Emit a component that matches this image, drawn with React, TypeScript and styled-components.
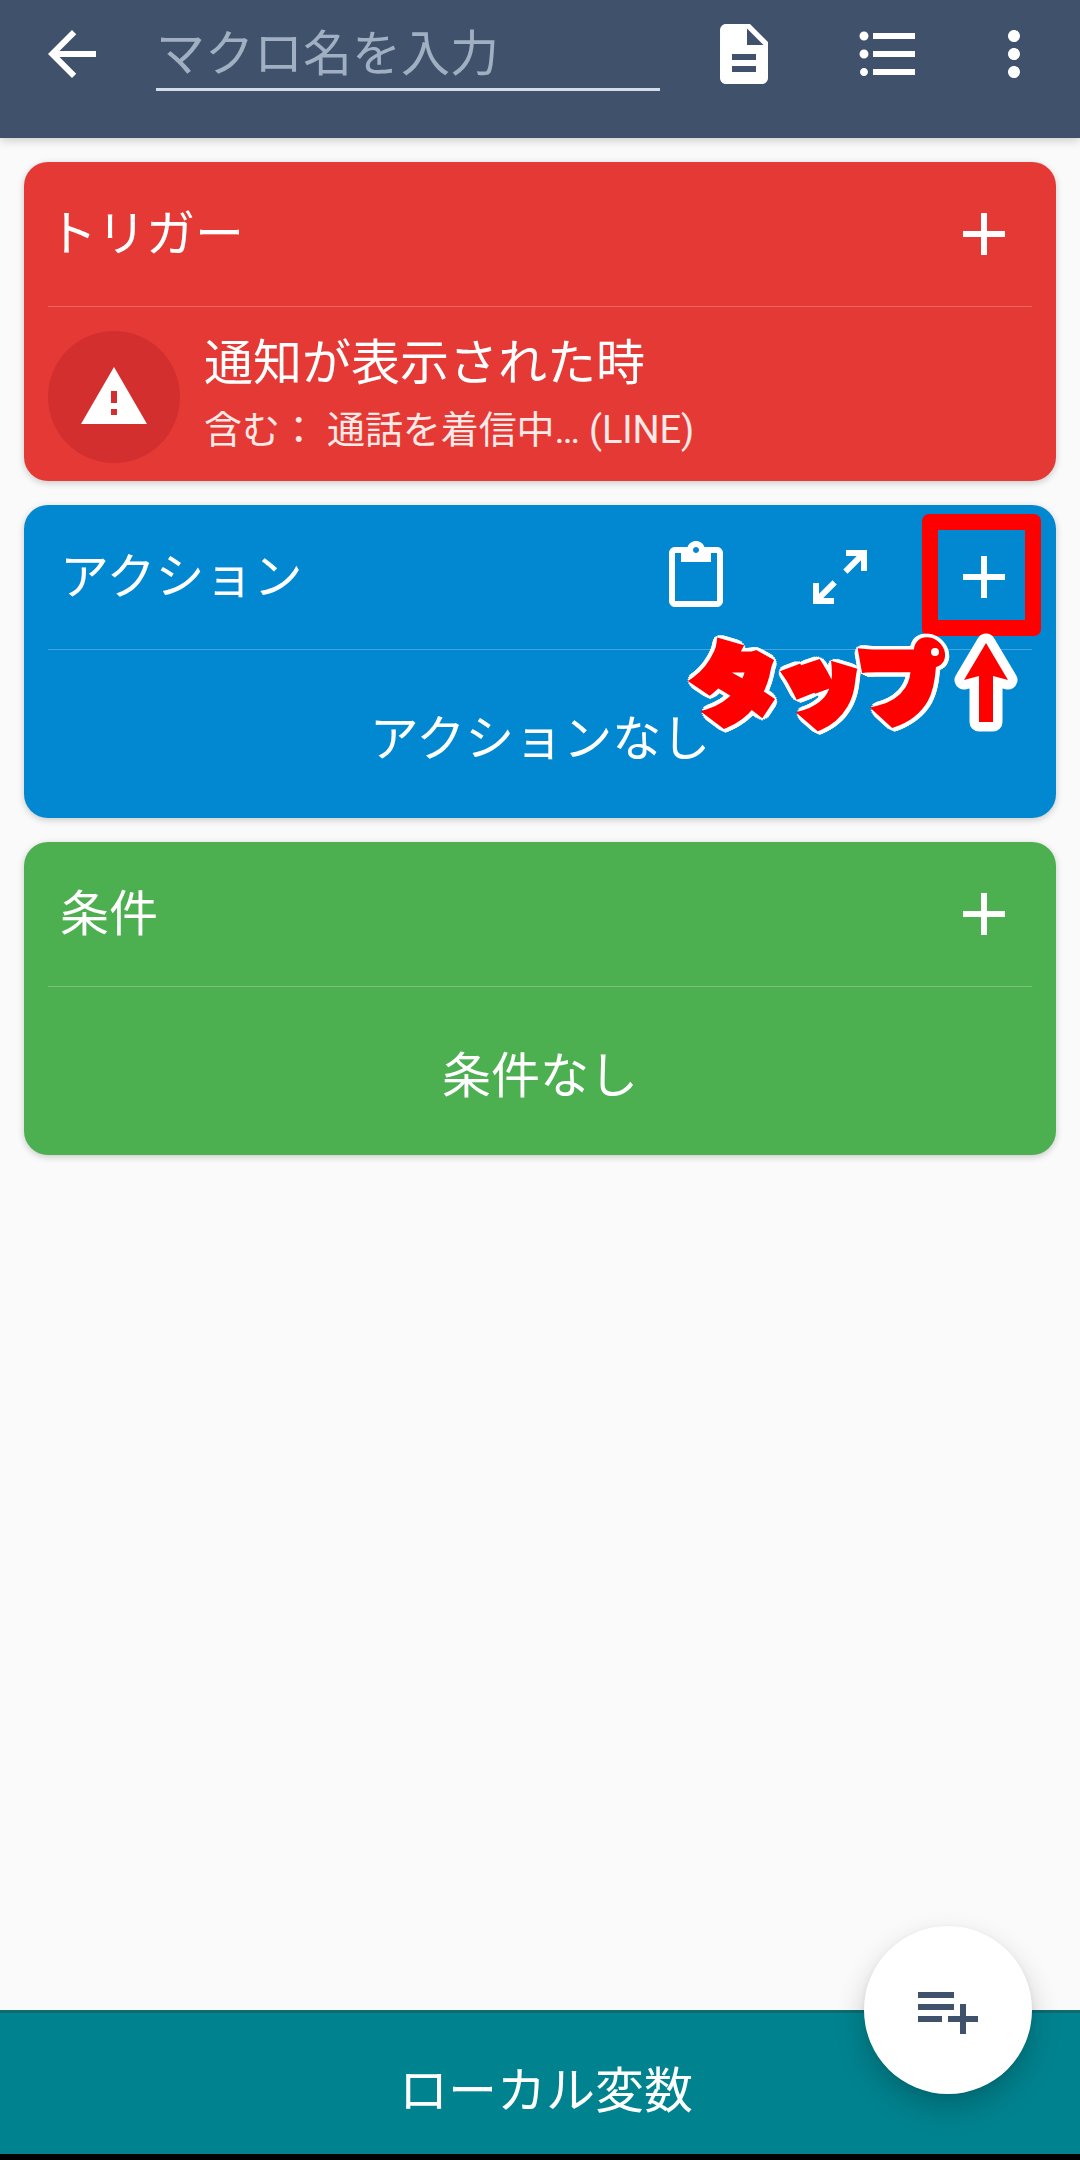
import React from 'react';
import styled, { createGlobalStyle } from 'styled-components';

const GlobalStyle = createGlobalStyle`
  * { box-sizing: border-box; }
  body {
    margin: 0;
    background: #fafafa;
    font-family: Roboto, "Noto Sans CJK JP", sans-serif;
  }
`;

const Screen = styled.div`
  position: relative;
  display: flex;
  flex-direction: column;
  width: 1080px;
  height: 2160px;
  overflow: hidden;
  background: #fafafa;
`;

const AppBar = styled.header`
  display: flex;
  align-items: flex-start;
  height: 138px;
  padding: 18px 30px 0 36px;
  background: #3f516b;
  box-shadow: 0 2px 10px rgba(0, 0, 0, 0.2);
`;

const IconButton = styled.button<{ $gap?: number }>`
  display: flex;
  flex: none;
  width: 72px;
  height: 72px;
  margin: 0 0 0 ${({ $gap = 0 }) => $gap}px;
  padding: 0;
  border: 0;
  background: none;
  color: #fff;
`;

const NameField = styled.div`
  width: 504px;
  height: 73px;
  margin-left: 48px;
  border-bottom: 3px solid #d3dce8;
  color: #a0afc1;
  font-size: 49px;
  line-height: 74px;
  white-space: nowrap;
`;

const Content = styled.main`
  display: flex;
  flex: 1;
  flex-direction: column;
  gap: 24px;
  padding: 24px;
`;

const Card = styled.section<{ $color: string }>`
  position: relative;
  border-radius: 24px;
  background: ${({ $color }) => $color};
  color: #fff;
  box-shadow: 0 2px 7px rgba(0, 0, 0, 0.2);
`;

const CardHeader = styled.div<{ $indent: number }>`
  display: flex;
  align-items: center;
  height: 145px;
  margin: 0 24px;
  padding: 0 12px 0 ${({ $indent }) => $indent}px;
  border-bottom: 1px solid rgba(255, 255, 255, 0.25);
`;

const CardTitle = styled.h2`
  flex: 1;
  margin: 0;
  padding-top: 2px;
  font-size: 49px;
  font-weight: 400;
  line-height: 72px;
`;

const TriggerRow = styled.div`
  display: flex;
  height: 174px;
  padding: 24px 24px 18px;
`;

const Badge = styled.div`
  display: flex;
  align-items: center;
  justify-content: center;
  width: 132px;
  height: 132px;
  margin-right: 24px;
  border-radius: 50%;
  background: #d32f2f;
`;

const TriggerText = styled.div`
  display: flex;
  flex-direction: column;
`;

const TriggerName = styled.div`
  height: 69px;
  font-size: 49px;
  line-height: 65px;
`;

const TriggerDetail = styled.div`
  font-size: 38px;
  line-height: 60px;
  letter-spacing: -0.1px;
  color: #ffe9e7;
  white-space: pre;
`;

const EmptyText = styled.div`
  height: 168px;
  font-size: 49px;
  line-height: 179px;
  text-align: center;
`;

const TapFrame = styled.div`
  position: absolute;
  top: 9px;
  left: 898px;
  width: 119px;
  height: 122px;
  border: 16px solid #f00;
  border-radius: 7px;
`;

const TapHint = styled.div`
  position: absolute;
  top: 124px;
  left: 664px;
  display: flex;
  align-items: flex-start;
`;

const TapWord = styled.div`
  position: relative;
  width: 261px;
  height: 110px;

  &::after {
    content: '';
    position: absolute;
    top: 19px;
    left: 243px;
    width: 8px;
    height: 8px;
    border-radius: 50%;
    background: #fff;
  }
`;

const TapLetters = styled.span`
  display: block;
  padding-left: 4px;
  font-family: "Noto Sans CJK JP", sans-serif;
  font-size: 87px;
  font-weight: 900;
  line-height: 101px;
  letter-spacing: -3px;
  white-space: nowrap;
  color: #f00;
  transform: skewX(10deg);
  -webkit-text-stroke: 9px #f00;
  text-shadow: ${Array.from({ length: 24 }, (_, i) => {
    const a = (i * Math.PI) / 12;
    return `${(8.5 * Math.cos(a)).toFixed(1)}px ${(8.5 * Math.sin(a)).toFixed(1)}px 0 #fff`;
  }).join(', ')};
`;

const BottomBar = styled.footer`
  height: 150px;
  padding-left: 12px;
  border-top: 3px solid #0c6c72;
  border-bottom: 6px solid #000;
  background: #00838f;
  color: #fff;
  font-size: 49px;
  line-height: 157px;
  text-align: center;
`;

const Fab = styled.button`
  position: absolute;
  right: 48px;
  bottom: 66px;
  display: flex;
  align-items: center;
  justify-content: center;
  width: 168px;
  height: 168px;
  padding: 0;
  border: 0;
  border-radius: 50%;
  background: #fff;
  color: #3f516b;
  box-shadow: 0 14px 30px rgba(0, 0, 0, 0.2), 0 2px 6px rgba(0, 0, 0, 0.06);
`;

const paths = {
  back: 'M20 11H7.83l5.59-5.59L12 4l-8 8 8 8 1.41-1.41L7.83 13H20v-2z',
  document:
    'M14 2H6c-1.1 0-1.99.9-1.99 2L4 20c0 1.1.89 2 1.99 2H18c1.1 0 2-.9 2-2V8l-6-6zm2 16H8v-2h8v2zm0-4H8v-2h8v2zm-3-5V3.5L18.5 9H13z',
  list: 'M4 10.5c-.83 0-1.5.67-1.5 1.5s.67 1.5 1.5 1.5 1.5-.67 1.5-1.5-.67-1.5-1.5-1.5zm0-6c-.83 0-1.5.67-1.5 1.5S3.17 7.5 4 7.5 5.5 6.83 5.5 6 4.83 4.5 4 4.5zm0 12.17c-.74 0-1.33.6-1.33 1.33s.6 1.33 1.33 1.33 1.33-.6 1.33-1.33-.59-1.33-1.33-1.33zM7 19h14v-2H7v2zm0-6h14v-2H7v2zm0-8v2h14V5H7z',
  more: 'M12 8c1.1 0 2-.9 2-2s-.9-2-2-2-2 .9-2 2 .9 2 2 2zm0 2c-1.1 0-2 .9-2 2s.9 2 2 2 2-.9 2-2-.9-2-2-2zm0 6c-1.1 0-2 .9-2 2s.9 2 2 2 2-.9 2-2-.9-2-2-2z',
  add: 'M19 13h-6v6h-2v-6H5v-2h6V5h2v6h6v2z',
  warning: 'M1 21h22L12 2 1 21zm12-3h-2v-2h2v2zm0-4h-2v-4h2v4z',
  paste:
    'M19 2h-4.18C14.4.84 13.3 0 12 0c-1.3 0-2.4.84-2.82 2H5c-1.1 0-2 .9-2 2v16c0 1.1.9 2 2 2h14c1.1 0 2-.9 2-2V4c0-1.1-.9-2-2-2zm-7 0c.55 0 1 .45 1 1s-.45 1-1 1-1-.45-1-1 .45-1 1-1zm7 18H5V4h2v3h10V4h2v16z',
  expand:
    'M10 21v-2H6.41l4.5-4.5-1.41-1.41-4.5 4.5V14H3v7h7zm4.5-10.09l4.5-4.5V10h2V3h-7v2h3.59l-4.5 4.5 1.41 1.41z',
  playlistAdd:
    'M14 10H2v2h12v-2zm0-4H2v2h12V6zm4 8v-4h-2v4h-4v2h4v4h2v-4h4v-2h-4zM2 16h8v-2H2v2z',
};

const Icon = ({ name }: { name: keyof typeof paths }) => (
  <svg width="72" height="72" viewBox="0 0 24 24" fill="currentColor">
    <path d={paths[name]} />
  </svg>
);

const UpArrow = () => (
  <svg width="80" height="110" viewBox="0 0 80 110">
    <path
      d="M37 14 L59 51 L44 47 V93 H30 V47 L15 51 Z"
      fill="#f00"
      stroke="#fff"
      strokeWidth="19"
      strokeLinejoin="round"
      paintOrder="stroke"
    />
  </svg>
);

export default function App() {
  return (
    <Screen>
      <GlobalStyle />
      <AppBar>
        <IconButton><Icon name="back" /></IconButton>
        <NameField>マクロ名を入力</NameField>
        <IconButton $gap={48}><Icon name="document" /></IconButton>
        <IconButton $gap={72}><Icon name="list" /></IconButton>
        <IconButton $gap={54}><Icon name="more" /></IconButton>
      </AppBar>
      <Content>
        <Card $color="#e53935">
          <CardHeader $indent={0}>
            <CardTitle>トリガー</CardTitle>
            <IconButton><Icon name="add" /></IconButton>
          </CardHeader>
          <TriggerRow>
            <Badge><Icon name="warning" /></Badge>
            <TriggerText>
              <TriggerName>通知が表示された時</TriggerName>
              <TriggerDetail>含む： 通話を着信中… (LINE)</TriggerDetail>
            </TriggerText>
          </TriggerRow>
        </Card>
        <Card $color="#0288d1">
          <CardHeader $indent={12}>
            <CardTitle>アクション</CardTitle>
            <IconButton><Icon name="paste" /></IconButton>
            <IconButton $gap={72}><Icon name="expand" /></IconButton>
            <IconButton $gap={72}><Icon name="add" /></IconButton>
          </CardHeader>
          <EmptyText>アクションなし</EmptyText>
          <TapFrame />
          <TapHint>
            <TapWord>
              <TapLetters>タップ</TapLetters>
            </TapWord>
            <UpArrow />
          </TapHint>
        </Card>
        <Card $color="#4caf50">
          <CardHeader $indent={12}>
            <CardTitle>条件</CardTitle>
            <IconButton><Icon name="add" /></IconButton>
          </CardHeader>
          <EmptyText>条件なし</EmptyText>
        </Card>
      </Content>
      <BottomBar>ローカル変数</BottomBar>
      <Fab><Icon name="playlistAdd" /></Fab>
    </Screen>
  );
}
